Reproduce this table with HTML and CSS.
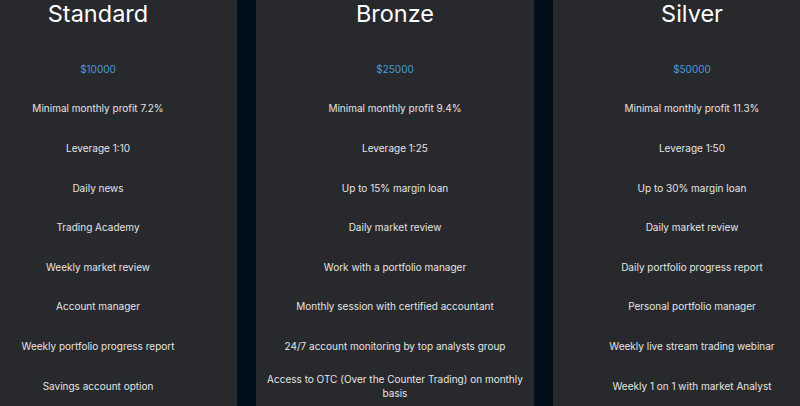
FILE: index.html
```html
<!DOCTYPE html>
<html lang="en">
<head>
<meta charset="utf-8">
<title>Plans</title>
<link rel="stylesheet" href="styles.css">
</head>
<body>
<div class="track">
  <section class="card">
    <h2 class="title">Standard</h2>
    <ul class="list">
      <li class="price">$10000</li>
      <li>Minimal monthly profit 7.2%</li>
      <li>Leverage 1:10</li>
      <li>Daily news</li>
      <li>Trading Academy</li>
      <li>Weekly market review</li>
      <li>Account manager</li>
      <li>Weekly portfolio progress report</li>
      <li>Savings account option</li>
    </ul>
  </section>
  <section class="card">
    <h2 class="title">Bronze</h2>
    <ul class="list">
      <li class="price">$25000</li>
      <li>Minimal monthly profit 9.4%</li>
      <li>Leverage 1:25</li>
      <li>Up to 15% margin loan</li>
      <li>Daily market review</li>
      <li>Work with a portfolio manager</li>
      <li>Monthly session with certified accountant</li>
      <li>24/7 account monitoring by top analysts group</li>
      <li>Access to OTC (Over the Counter Trading) on monthly basis</li>
    </ul>
  </section>
  <section class="card">
    <h2 class="title">Silver</h2>
    <ul class="list">
      <li class="price">$50000</li>
      <li>Minimal monthly profit 11.3%</li>
      <li>Leverage 1:50</li>
      <li>Up to 30% margin loan</li>
      <li>Daily market review</li>
      <li>Daily portfolio progress report</li>
      <li>Personal portfolio manager</li>
      <li>Weekly live stream trading webinar</li>
      <li>Weekly 1 on 1 with market Analyst</li>
    </ul>
  </section>
</div>
</body>
</html>
```
FILE: styles.css
```css
html, body {
  margin: 0;
  padding: 0;
  background: #010f1a;
  overflow: hidden;
  height: 406px;
}
.track {
  display: flex;
  gap: 19px;
  margin-left: -41px;
  width: 900px;
}
.card {
  flex: 0 0 278px;
  background: #28292c;
  height: 420px;
  padding: 0 11px;
  box-sizing: border-box;
  text-align: center;
}
.title {
  margin: 0;
  font-family: Inter, "Liberation Sans", sans-serif;
  font-weight: 400;
  font-size: 23.5px;
  line-height: 28px;
  color: #ffffff;
}
.list {
  list-style: none;
  margin: 21px 0 0;
  padding: 0;
  font-family: Inter, "Liberation Sans", sans-serif;
  font-size: 10px;
  line-height: 14px;
  color: #e4e4e4;
}
.list li {
  height: 39.6px;
  display: flex;
  align-items: center;
  justify-content: center;
}
.list .price {
  color: #4a9ad6;
}
```
